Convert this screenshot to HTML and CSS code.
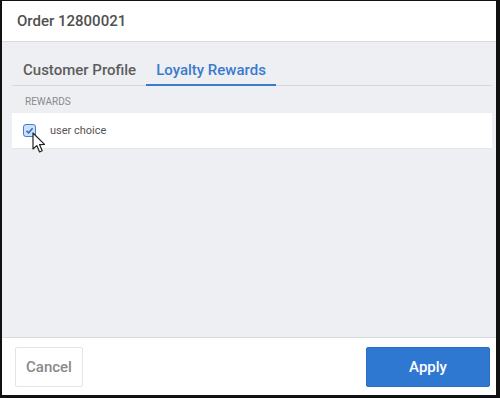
FILE: index.html
```html
<!DOCTYPE html>
<html>
<head>
<meta charset="utf-8">
<link rel="stylesheet" href="styles.css">
</head>
<body>
<div class="frame">
  <div class="dialog">
    <div class="header">Order 12800021</div>
    <div class="content">
      <div class="tabs">
        <div class="tab">Customer Profile</div>
        <div class="tab active">Loyalty Rewards</div>
      </div>
      <div class="section-label">REWARDS</div>
      <div class="row">
        <span class="checkbox">
          <svg width="9" height="9" viewBox="0 0 9 9"><path d="M1.5 4.8 L3.6 6.8 L7.6 2.2" fill="none" stroke="#2f6fc6" stroke-width="1.6"/></svg>
        </span>
        <span class="row-label">user choice</span>
        <svg class="cursor" width="16" height="22" viewBox="0 0 16 22"><path d="M1 1 L1 17 L4.8 13.6 L7.6 20 L10.2 18.8 L7.5 12.6 L12.5 12.4 Z" fill="#fff" stroke="#222" stroke-width="1.2" stroke-linejoin="round"/></svg>
      </div>
    </div>
    <div class="footer">
      <button class="btn cancel">Cancel</button>
      <button class="btn apply">Apply</button>
    </div>
  </div>
</div>
</body>
</html>
```
FILE: styles.css
```css
* { box-sizing: border-box; }
html, body { margin: 0; padding: 0; background: #000; }
.frame {
  width: 500px;
  height: 398px;
  background: #111;
  border-style: solid;
  border-color: #111;
  border-width: 1px 4px 3px 2px;
}
.dialog {
  width: 100%;
  height: 100%;
  display: flex;
  flex-direction: column;
  background: #eeeff2;
  font-family: Roboto, "Liberation Sans", sans-serif;
}
.header {
  height: 41px;
  flex: none;
  background: #fff;
  border-bottom: 1px solid #d9dadd;
  padding: 0 0 0 15px;
  display: flex;
  align-items: center;
  font-size: 15px;
  font-weight: 500;
  color: #505050;
}
.content {
  flex: 1;
  padding: 0 4px 0 10px;
}
.tabs {
  display: flex;
  height: 44px;
  border-bottom: 1px solid #d6d7da;
}
.tab {
  padding: 12px 10px 0 11px;
  display: flex;
  align-items: center;
  font-size: 15px;
  font-weight: 500;
  color: #5d5d5d;
  position: relative;
}
.tab.active {
  color: #3a7bd0;
  padding: 12px 10px 0 10px;
}
.tab.active::after {
  content: "";
  position: absolute;
  left: 0;
  right: 0;
  bottom: -1px;
  height: 2px;
  background: #3a7bd0;
}
.section-label {
  font-size: 10px;
  color: #8a8a8a;
  padding: 10px 0 0 13px;
  height: 27px;
}
.row {
  position: relative;
  background: #fff;
  height: 36px;
  display: flex;
  align-items: center;
  padding-left: 11px;
  border-bottom: 1px solid #e6e7ea;
}
.checkbox {
  width: 13px;
  height: 13px;
  border: 1.5px solid #3f7fd4;
  border-radius: 3px;
  background: #cfe0f6;
  display: inline-flex;
  align-items: center;
  justify-content: center;
}
.row-label {
  margin-left: 14px;
  font-size: 11px;
  color: #555;
}
.cursor {
  position: absolute;
  left: 20px;
  top: 19px;
}
.footer {
  height: 58px;
  flex: none;
  background: #fff;
  border-top: 1px solid #d9dadd;
  display: flex;
  justify-content: space-between;
  align-items: center;
  padding: 0 6px 0 13px;
}
.btn {
  font-family: Roboto, "Liberation Sans", sans-serif;
  font-size: 15px;
  font-weight: 500;
  height: 40px;
  border-radius: 2px;
  cursor: pointer;
}
.cancel {
  width: 68px;
  background: #fff;
  color: #8a8a8a;
  border: 1px solid #e3e4e6;
}
.apply {
  width: 124px;
  background: #2f78d2;
  color: #fff;
  border: 1px solid #2a6fc4;
}
```
